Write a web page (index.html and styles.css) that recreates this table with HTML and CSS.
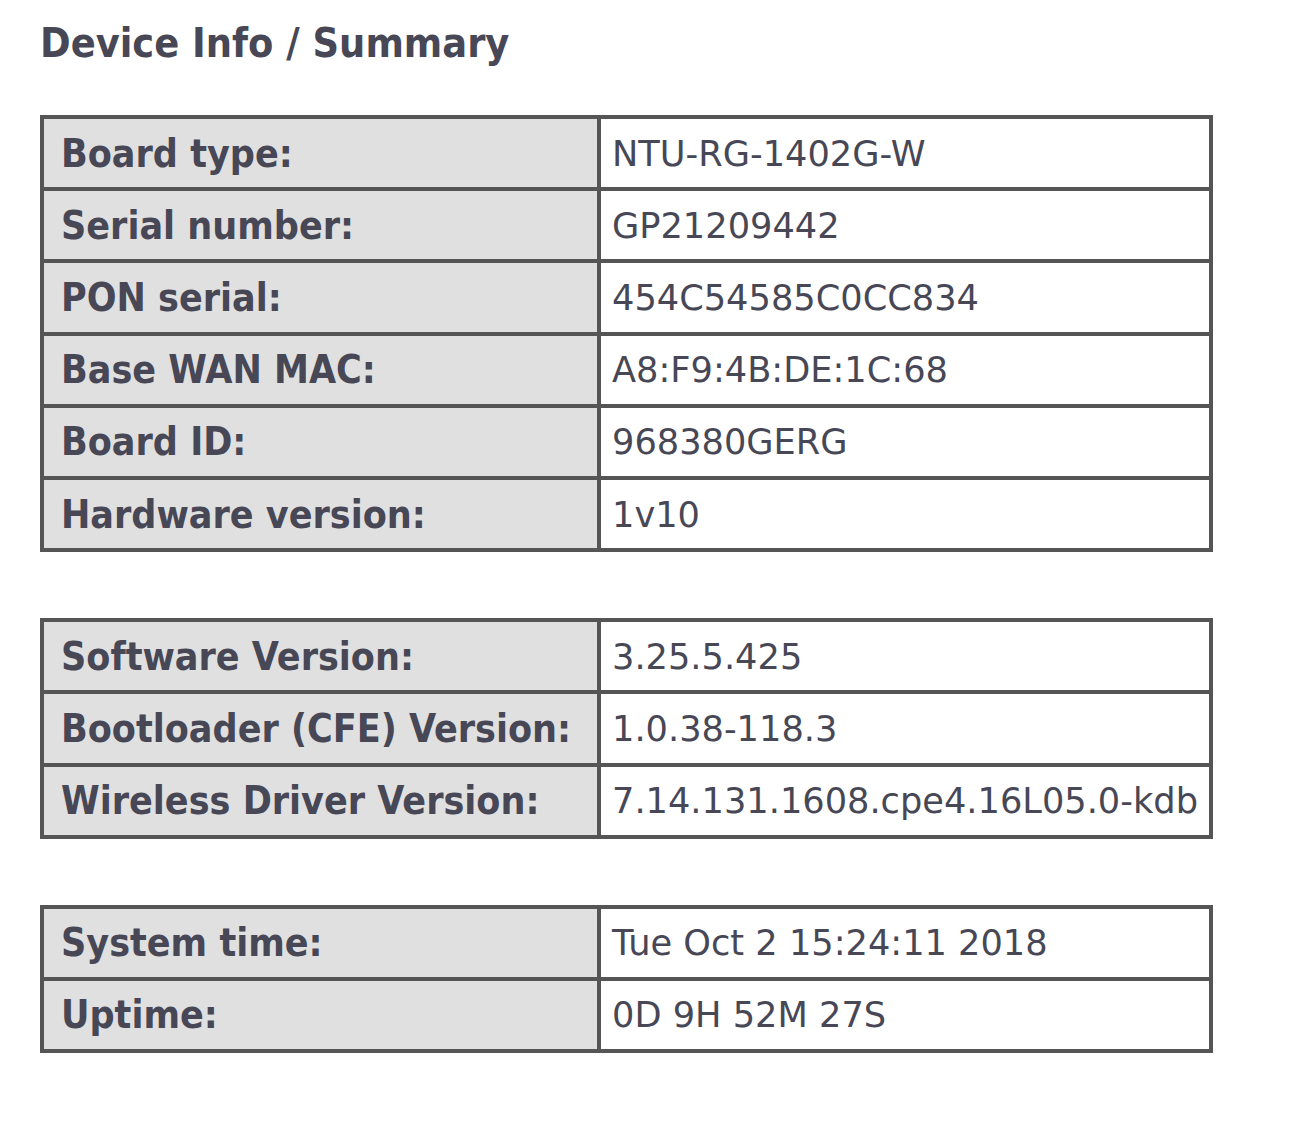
FILE: index.html
```html
<!DOCTYPE html>
<html>
<head>
<meta charset="utf-8">
<title>Device Info / Summary</title>
<link rel="stylesheet" href="styles.css">
</head>
<body>
<div class="page">
  <h1 class="title">Device Info / Summary</h1>

  <table class="info">
    <tr><td class="lbl">Board type:</td><td class="val">NTU-RG-1402G-W</td></tr>
    <tr><td class="lbl">Serial number:</td><td class="val">GP21209442</td></tr>
    <tr><td class="lbl">PON serial:</td><td class="val">454C54585C0CC834</td></tr>
    <tr><td class="lbl">Base WAN MAC:</td><td class="val">A8:F9:4B:DE:1C:68</td></tr>
    <tr><td class="lbl">Board ID:</td><td class="val">968380GERG</td></tr>
    <tr><td class="lbl">Hardware version:</td><td class="val">1v10</td></tr>
  </table>

  <table class="info">
    <tr><td class="lbl">Software Version:</td><td class="val">3.25.5.425</td></tr>
    <tr><td class="lbl">Bootloader (CFE) Version:</td><td class="val">1.0.38-118.3</td></tr>
    <tr><td class="lbl">Wireless Driver Version:</td><td class="val">7.14.131.1608.cpe4.16L05.0-kdb</td></tr>
  </table>

  <table class="info">
    <tr><td class="lbl">System time:</td><td class="val">Tue Oct 2 15:24:11 2018</td></tr>
    <tr><td class="lbl">Uptime:</td><td class="val">0D 9H 52M 27S</td></tr>
  </table>
</div>
</body>
</html>
```

FILE: styles.css
```css
html, body {
  margin: 0;
  padding: 0;
  background: #ffffff;
}

.page {
  padding: 19px 0 0 40px;
  font-family: "DejaVu Sans Condensed", "DejaVu Sans", sans-serif;
  color: #474756;
}

.title {
  margin: 0 0 48px 0;
  font-size: 41px;
  line-height: 48px;
  font-weight: bold;
}

.info {
  border-collapse: collapse;
  border: 4px solid #555555;
  margin-bottom: 66px;
  table-layout: fixed;
}

.info td {
  border: 4px solid #555555;
  height: 72.2px;
  padding: 0;
  vertical-align: middle;
  white-space: nowrap;
  box-sizing: border-box;
}

.lbl {
  width: 557px;
  background: #e0e0e0;
  font-weight: bold;
  font-size: 39px;
  padding-left: 17px !important;
}

.val {
  width: 612px;
  background: #ffffff;
  font-family: "DejaVu Sans", sans-serif;
  font-size: 35.2px;
  padding-left: 11px !important;
}
```
